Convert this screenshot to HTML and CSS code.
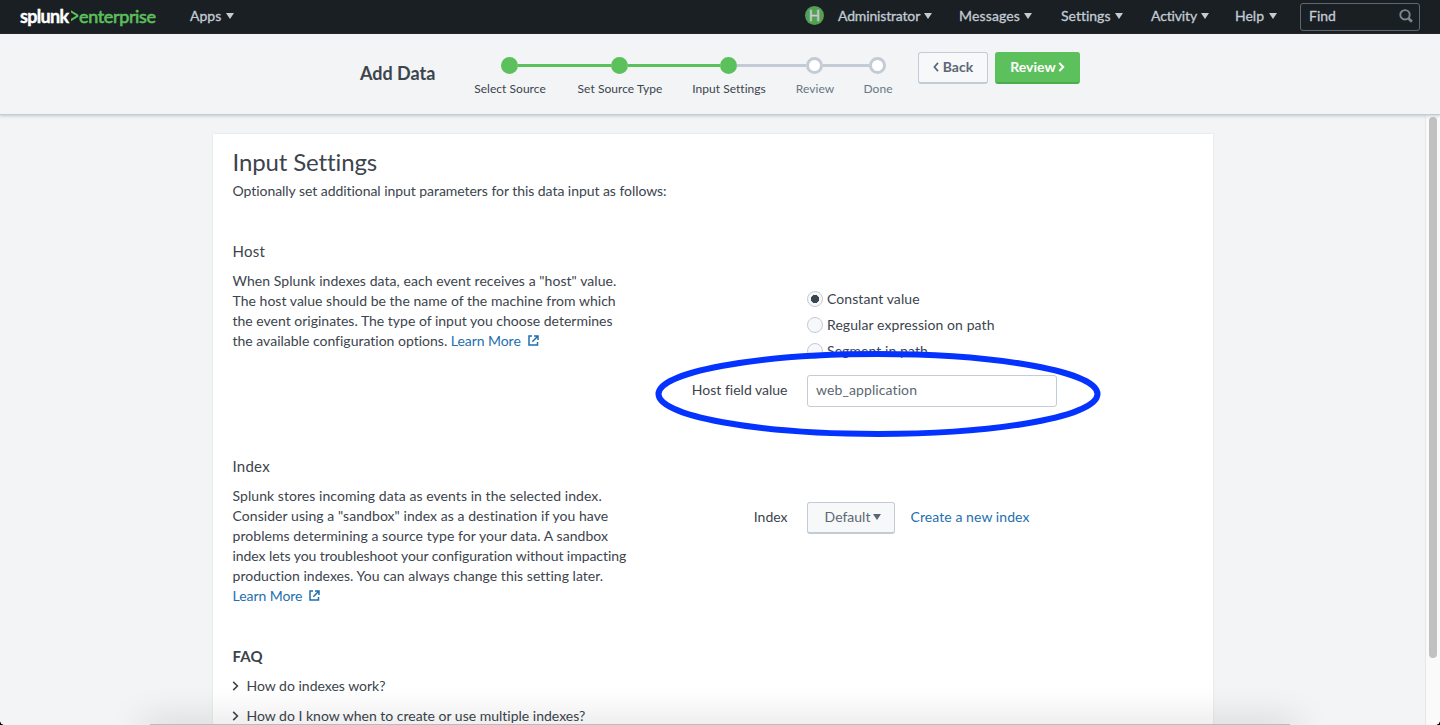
FILE: index.html
```html
<!DOCTYPE html>
<html lang="en">
<head>
<meta charset="utf-8">
<title>Add Data - Input Settings | Splunk</title>
<link rel="stylesheet" href="styles.css">
</head>
<body>
<div class="app">
  <nav class="navbar">
    <a class="logo"><span class="logo-name">splunk</span><svg class="logo-mark" width="9" height="14" viewBox="0 0 9 14"><path d="M1 1.2V3.6L6.2 6.7 1 9.8v2.4l7.3-4.5V5.7z" fill="#5cc05c"/></svg><span class="logo-product">enterprise</span></a>
    <a class="nav-item nav-apps"><span class="t">Apps</span><i class="caret"></i></a>
    <span class="avatar">H</span>
    <a class="nav-item nav-admin"><span class="t">Administrator</span><i class="caret"></i></a>
    <a class="nav-item nav-messages"><span class="t">Messages</span><i class="caret"></i></a>
    <a class="nav-item nav-settings"><span class="t">Settings</span><i class="caret"></i></a>
    <a class="nav-item nav-activity"><span class="t">Activity</span><i class="caret"></i></a>
    <a class="nav-item nav-help"><span class="t">Help</span><i class="caret"></i></a>
    <div class="find"><span>Find</span><svg width="14" height="14" viewBox="0 0 14 14" fill="none" stroke="#7b8794"><circle cx="6" cy="5.8" r="4.7" stroke-width="1.9"/><path d="M9.4 9.2l3.5 3.5" stroke-width="2.7"/></svg></div>
  </nav>

  <header class="wizard">
    <h1 class="wizard-title">Add Data</h1>
    <ol class="steps">
      <li class="step first done"><div class="rail"><i></i><b></b><i></i></div><span>Select Source</span></li>
      <li class="step done"><div class="rail"><i></i><b></b><i></i></div><span>Set Source Type</span></li>
      <li class="step current"><div class="rail"><i></i><b></b><i></i></div><span>Input Settings</span></li>
      <li class="step"><div class="rail"><i></i><b></b><i></i></div><span>Review</span></li>
      <li class="step last"><div class="rail"><i></i><b></b><i></i></div><span>Done</span></li>
    </ol>
    <button class="btn btn-back"><svg width="6" height="10" viewBox="0 0 6 10"><path d="M5 .9L1.4 5 5 9.1" fill="none" stroke="#5c6773" stroke-width="1.7"/></svg>Back</button>
    <button class="btn btn-primary">Review<svg width="7" height="10" viewBox="0 0 7 10"><path d="M1.3.9L5.2 5 1.3 9.1" fill="none" stroke="#fff" stroke-width="2.1"/></svg></button>
  </header>

  <div class="viewport">
    <main class="panel">
      <h2 class="title">Input Settings</h2>
      <p class="intro">Optionally set additional input parameters for this data input as follows:</p>

      <section class="row host">
        <div class="help">
          <h3>Host</h3>
          <p><span class="loose">When Splunk indexes data, each event receives a "host" value.</span><br>The host value should be the name of the machine from which<br><span class="snug">the event originates. The type of input you choose determines</span><br><span class="snug">the available configuration options. <a class="link">Learn More<svg class="ext" width="11" height="11" viewBox="0 0 11 11" fill="none" stroke="#1e6fae" stroke-width="1.5"><path d="M4 1H1v9h8.5V7"/><path d="M6 1h4v4M10 1L4.3 6.7"/></svg></a></span></p>
        </div>
        <div class="fields">
          <div class="radios">
            <label class="radio checked"><i></i>Constant value</label>
            <label class="radio"><i></i>Regular expression on path</label>
            <label class="radio"><i></i>Segment in path</label>
          </div>
          <div class="field">
            <span class="label">Host field value</span>
            <div class="input">web_application</div>
            <svg class="ring" width="446" height="88" viewBox="0 0 446 88"><ellipse cx="223" cy="44" rx="219.5" ry="40" fill="none" stroke="#0433ff" stroke-width="6"/></svg>
          </div>
        </div>
      </section>

      <section class="row index">
        <div class="help">
          <h3>Index</h3>
          <p><span class="loose">Splunk stores incoming data as events in the selected index.</span><br><span class="loose">Consider using a "sandbox" index as a destination if you have</span><br><span class="loose">problems determining a source type for your data. A sandbox</span><br><span class="tight">index lets you troubleshoot your configuration without impacting</span><br>production indexes. You can always change this setting later.<br><a class="link">Learn More<svg class="ext" width="11" height="11" viewBox="0 0 11 11" fill="none" stroke="#1e6fae" stroke-width="1.5"><path d="M4 1H1v9h8.5V7"/><path d="M6 1h4v4M10 1L4.3 6.7"/></svg></a></p>
        </div>
        <div class="fields">
          <div class="field">
            <span class="label">Index</span>
            <button class="btn btn-select">Default<i class="caret"></i></button>
            <a class="link create">Create a new index</a>
          </div>
        </div>
      </section>

      <section class="faq">
        <h4>FAQ</h4>
        <div class="question"><svg width="7" height="10" viewBox="0 0 7 10"><path d="M1.2.9L5.4 5 1.2 9.1" fill="none" stroke="#3c444d" stroke-width="1.6"/></svg>How do indexes work?</div>
        <div class="question"><svg width="7" height="10" viewBox="0 0 7 10"><path d="M1.2.9L5.4 5 1.2 9.1" fill="none" stroke="#3c444d" stroke-width="1.6"/></svg>How do I know when to create or use multiple indexes?</div>
      </section>
    </main>
    <div class="scrollbar"><div class="thumb"></div></div>
  </div>
  <div class="window-shadow"></div>
  <i class="corner left"></i>
  <i class="corner right"></i>
</div>
</body>
</html>
```
FILE: styles.css
```css
* { box-sizing: border-box; }
html, body { margin: 0; height: 100%; overflow: hidden; }
body { font-family: Lato, "Open Sans", sans-serif; font-size: 14px; line-height: 20px; color: #3c444d; background: #f2f4f5; font-variant-ligatures: none; }
h1, h2, h3, h4, p, ol { margin: 0; padding: 0; font-weight: 400; }
svg { display: block; flex: none; }
i, b { display: block; flex: none; }
.app { position: relative; width: 1440px; height: 725px; display: flex; flex-direction: column; overflow: hidden; }

.navbar { height: 34px; flex: none; background: #1a1f23; display: flex; align-items: flex-start; padding: 0 20px; color: #c3cbd4; }
.logo { display: flex; align-items: center; width: 170px; height: 32px; font-size: 18px; }
.logo-name { color: #fff; font-weight: 700; letter-spacing: -0.7px; width: 50px; -webkit-text-stroke: 0.4px #fff; }
.logo-product { color: #5cc05c; letter-spacing: -0.35px; -webkit-text-stroke: 0.6px #5cc05c; }
.nav-item { display: flex; align-items: center; gap: 4px; height: 32px; -webkit-text-stroke: 0.3px #c3cbd4; white-space: nowrap; }
.caret { width: 0; height: 0; border: 4.5px solid transparent; border-top: 6px solid #c3cbd4; border-bottom: 0; margin-top: -1px; }
.nav-apps { width: 615px; gap: 5px; }
.avatar { width: 19px; height: 19px; margin: 6px 14px 0 0; border-radius: 50%; background: #53a051; color: #c3cbd4; text-align: center; line-height: 19px; font-size: 15px; -webkit-text-stroke: 0.4px #c3cbd4; }
.nav-admin { width: 121px; letter-spacing: -0.16px; }
.nav-messages { width: 102px; letter-spacing: 0.15px; }
.nav-settings { width: 90px; gap: 5px; }
.nav-activity { width: 84px; letter-spacing: -0.15px; }
.nav-help { width: 65px; gap: 5px; }
.find { width: 120px; height: 28px; margin-top: 3px; border: 1px solid #5c6773; border-radius: 3px; display: flex; align-items: center; justify-content: space-between; padding: 0 6px 2px 8px; -webkit-text-stroke: 0.3px #c3cbd4; }

.wizard { position: relative; z-index: 1; height: 81px; flex: none; display: flex; align-items: flex-start; background: #f2f4f5; border-bottom: 1px solid #c3cbd4; box-shadow: 0 1px 3px rgba(120, 135, 155, .4); padding-left: 360px; }
.wizard-title { width: 94.5px; margin-top: 29px; font-size: 18px; font-weight: 700; white-space: nowrap; }
.steps { list-style: none; display: flex; margin-top: 23px; width: 463.5px; }
.step { width: 110px; display: flex; flex-direction: column; align-items: center; font-size: 12px; line-height: 16px; gap: 7px; color: #6b7785; white-space: nowrap; }
.step span { padding-left: 1px; letter-spacing: 0.04px; }
.step:nth-child(3) { width: 108px; }
.step:nth-child(4) { width: 64px; }
.step:nth-child(5) { width: 62px; }
.done, .current { color: #3c444d; }
.rail { display: flex; align-items: center; width: 100%; }
.rail i { flex: 1; height: 3px; background: #c3cbd4; }
.rail b { width: 17px; height: 17px; border-radius: 50%; border: 3px solid #c3cbd4; background: #fff; }
.done .rail i, .current .rail i:first-child { background: #5cc05c; }
.done .rail b, .current .rail b { background: #5cc05c; border-color: #5cc05c; }
.first .rail i:first-child, .last .rail i:last-child { visibility: hidden; }
.btn { font: inherit; display: flex; align-items: center; justify-content: center; height: 32px; border: 1px solid #c3cbd4; border-bottom-width: 2px; border-radius: 3px; background: #f7f8fa; color: #5c6773; padding: 0 0 1px; white-space: nowrap; }
.btn-back { width: 70px; margin-top: 18px; gap: 4px; font-weight: 700; }
.btn-primary { width: 85px; margin: 18px 0 0 7px; gap: 2px; background: #5cc05c; border-color: #5cc05c #5cc05c #4cab4c; color: #fff; font-weight: 700; }

.viewport { flex: 1; min-height: 0; display: flex; justify-content: space-between; }
.panel { width: 1000px; height: 620px; margin: 19px 0 0 213px; padding: 13px 20px 0 19.5px; background: #fff; box-shadow: 0 0 2px rgba(60, 80, 100, .12); white-space: nowrap; letter-spacing: 0.03px; }
.title { font-size: 24px; line-height: 30px; letter-spacing: -0.12px; }
.intro { margin-top: 4px; letter-spacing: -0.05px; }
.loose { letter-spacing: 0.06px; }
.snug { letter-spacing: 0; }
.tight { letter-spacing: -0.06px; }
.row { display: flex; }
.host { margin-top: 40px; height: 215px; }
.index { height: 190px; }
.help { width: 440px; }
.help h3 { font-size: 15px; margin-bottom: 10px; letter-spacing: 0.25px; }
.link { color: #1e6fae; letter-spacing: -0.05px; }
.ext { display: inline-block; margin-left: 7px; }
.fields { flex: 1; }
.radios { margin: 48px 0 0 134px; letter-spacing: 0.08px; }
.radio { display: flex; align-items: center; gap: 4.5px; height: 20px; margin-bottom: 6px; }
.radio i { width: 16px; height: 16px; border: 1px solid #c3cbd4; border-radius: 50%; background: #f7f8fa; }
.radio.checked i { background: radial-gradient(circle, #3c444d 0 3.8px, #f7f8fa 4.4px); }
.field { position: relative; display: flex; align-items: center; }
.host .field { margin-top: 14px; }
.label { width: 115px; margin-right: 19.5px; text-align: right; margin-top: -3px; letter-spacing: 0; }
.input { width: 250px; height: 32px; border: 1px solid #c3cbd4; border-radius: 3px; padding: 4px 8px; color: #5c6773; letter-spacing: 0.1px; }
.ring { position: absolute; left: -17.5px; top: -25px; }
.index .field { margin-top: 46px; }
.btn-select { width: 88px; gap: 3px; padding-left: 4px; }
.btn-select .caret { border-top-color: #5c6773; }
.create { margin: -3px 0 0 15.5px; letter-spacing: 0.08px; }
.faq h4 { font-size: 15px; font-weight: 700; margin-bottom: 10px; letter-spacing: 0.2px; }
.question { display: flex; align-items: center; gap: 7px; margin-bottom: 10px; letter-spacing: 0; }
.question svg { margin-left: -0.5px; margin-right: 0.5px; }
.scrollbar { width: 15px; background: #fafafa; border-left: 1px solid #e7e7e7; padding: 2px 0 0 3px; }
.thumb { width: 8px; height: 541px; border-radius: 4px; background: #c1c1c1; }

.window-shadow { position: absolute; left: 150px; right: 150px; bottom: 0; height: 1px; background: #bcbcbc; box-shadow: 0 8px 38px 8px rgba(0, 0, 0, .2); }
.corner { position: absolute; bottom: 0; width: 4px; height: 4px; }
.left { left: 0; background: radial-gradient(circle at 100% 0, transparent 3.5px, #000 4px); }
.right { right: 0; background: radial-gradient(circle at 0 0, transparent 3.5px, #000 4px); }
```
